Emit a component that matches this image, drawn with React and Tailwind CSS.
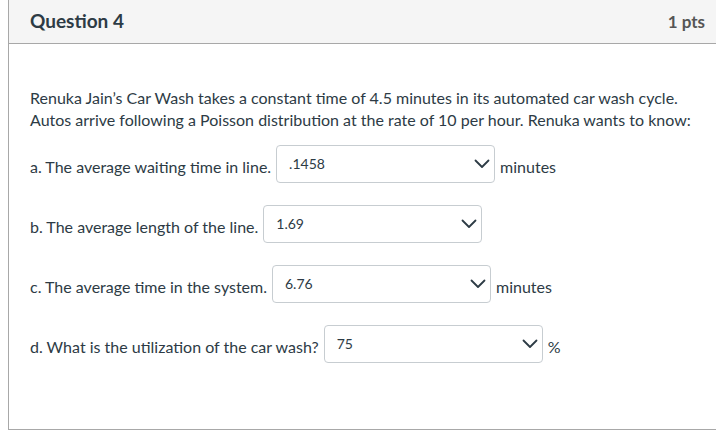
import React from 'react';

const Chevron = () => (
  <svg width="16" height="10" viewBox="0 0 16 10" fill="none" className="shrink-0">
    <path d="M1.5 1.5 L8 8 L14.5 1.5" stroke="#2d3b45" strokeWidth="1.8" strokeLinecap="round" strokeLinejoin="round" />
  </svg>
);

const Answer = ({ label, value, unit }) => (
  <div className="flex items-center">
    <span className="mt-[6px] mr-[5px]">{label}</span>
    <div className="flex items-center justify-between w-[219px] h-[38px] border border-[#c7cdd1] rounded-[4px] bg-white pl-[12px] pr-[4px]">
      <span className="text-[14px] -mt-[2px]">{value}</span>
      <Chevron />
    </div>
    {unit && <span className="mt-[6px] ml-[5px]">{unit}</span>}
  </div>
);

export default function App() {
  const rows = [
    { label: 'a. The average waiting time in line.', value: '.1458', unit: 'minutes' },
    { label: 'b. The average length of the line.', value: '1.69' },
    { label: 'c. The average time in the system.', value: '6.76', unit: 'minutes' },
    { label: 'd. What is the utilization of the car wash?', value: '75', unit: '%' },
  ];

  return (
    <div className="bg-white w-[716px] h-[436px] overflow-hidden" style={{ fontFamily: 'Lato, "Open Sans", sans-serif' }}>
      <div className="ml-[8px] w-[708px] h-[430px] border-l border-b border-[#a8a8a8] text-[#2d3b45]">
        {/* header */}
        <div className="h-[44px] bg-[#f5f5f5] border-b border-[#a8a8a8] flex items-center justify-between pl-[21px] pr-[11px]">
          <span className="text-[19px] font-bold">Question 4</span>
          <span className="text-[17px] font-bold text-[#555]">1 pts</span>
        </div>

        <div className="pl-[21px] pt-[43px] text-[16px]">
          <p className="leading-[22px]">
            Renuka Jain’s Car Wash takes a constant time of 4.5 minutes in its automated car wash cycle.
            <br />
            Autos arrive following a Poisson distribution at the rate of 10 per hour. Renuka wants to know:
          </p>
          <div className="mt-[14px] flex flex-col gap-[22px]">
            {rows.map((r) => (
              <Answer key={r.label} {...r} />
            ))}
          </div>
        </div>
      </div>
    </div>
  );
}
